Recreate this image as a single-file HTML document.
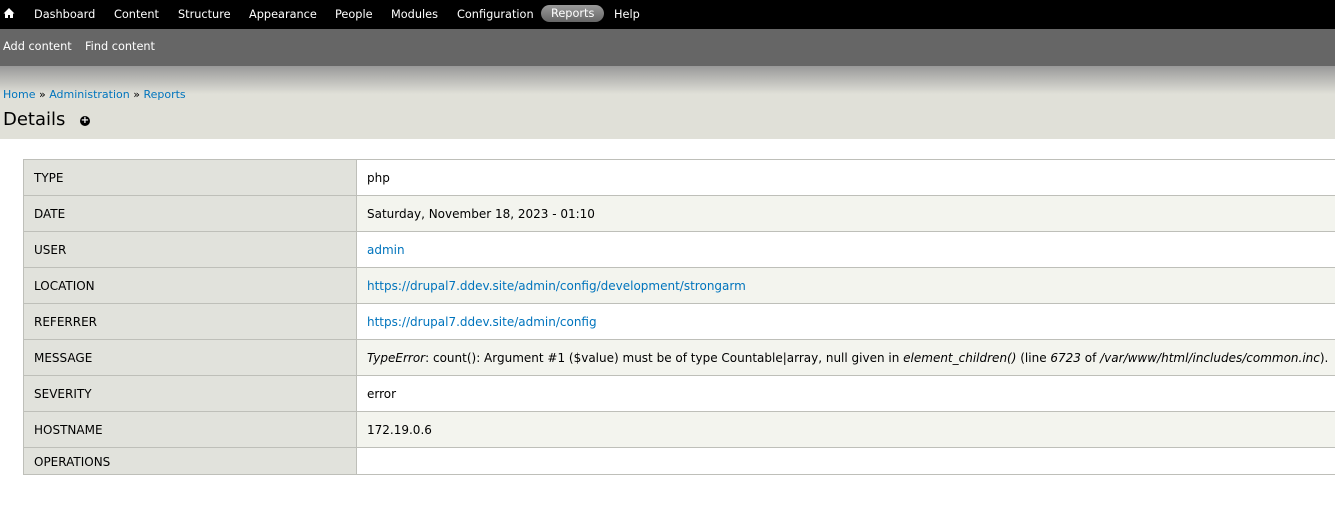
<!DOCTYPE html>
<html><head><style>
*{margin:0;padding:0;box-sizing:border-box}
body{width:1335px;height:514px;background:#fff;font-family:"DejaVu Sans","Liberation Sans",sans-serif;font-size:12px;color:#000;overflow:hidden;position:relative}
a{color:#0074bd;text-decoration:none}
#tb{position:absolute;top:0;left:0;width:1335px;height:29px;background:#000;color:#fff}
#tb span{position:absolute;top:8px;font-size:11.3px}
#tb .act{border-radius:10px;padding:2px 10px;top:5px;background:linear-gradient(#999,#666)}
#sc{position:absolute;top:29px;left:0;width:1335px;height:37px;background:#666;color:#fff}
#sc span{position:absolute;top:10px;font-size:11.3px}
#hd{position:absolute;top:66px;left:0;width:1335px;height:73px;background:linear-gradient(#999 0,#e0e0d8 28px,#e0e0d8 100%)}
#bc{position:absolute;top:22px;left:3px;font-size:11px}
#h1{position:absolute;top:43px;left:3px;font-size:18px;font-weight:normal}
#plus{position:absolute;top:50px;left:80px;width:10px;height:10px;border-radius:50%;background:#000;color:#fff;font-size:10px;line-height:10px;text-align:center;font-weight:bold}
table{position:absolute;top:159px;left:23px;width:1320px;border-collapse:collapse;border-top:1px solid #bebfb9}
td{height:36px;border-bottom:1px solid #bebfb9;font-size:12px;vertical-align:middle;padding:1px 0 0 10px;border-left:1px solid #bebfb9}
th{width:333px;background:#e1e2dc;border:1px solid #bebfb9;text-align:left;font-weight:normal;padding:1px 0 0 10px;font-size:12px}
tr:nth-child(even) td{background:#f3f4ee}
tr:last-child th,tr:last-child td{height:27px}
</style></head><body>
<div id="tb">
<span style="left:3px;top:7px"><svg width="12" height="12" viewBox="0 0 12 12"><path d="M6 1L0.5 6.5H2V11H5V8H7V11H10V6.5H11.5Z" fill="#fff"/></svg></span>
<span style="left:34px">Dashboard</span><span style="left:114px">Content</span><span style="left:178px">Structure</span><span style="left:249px">Appearance</span><span style="left:335px">People</span><span style="left:391px">Modules</span><span style="left:457px">Configuration</span><span class="act" style="left:541px">Reports</span><span style="left:614px">Help</span>
</div>
<div id="sc"><span style="left:3px;top:11px">Add content</span><span style="left:85px;top:11px">Find content</span></div>
<div id="hd"><div id="bc"><a>Home</a> » <a>Administration</a> » <a>Reports</a></div><div id="h1">Details</div><div id="plus">+</div></div>
<table>
<tr><th>TYPE</th><td>php</td></tr>
<tr><th>DATE</th><td>Saturday, November 18, 2023 - 01:10</td></tr>
<tr><th>USER</th><td><a>admin</a></td></tr>
<tr><th>LOCATION</th><td><a>https://drupal7.ddev.site/admin/config/development/strongarm</a></td></tr>
<tr><th>REFERRER</th><td><a>https://drupal7.ddev.site/admin/config</a></td></tr>
<tr><th>MESSAGE</th><td><i>TypeError</i>: count(): Argument #1 ($value) must be of type Countable|array, null given in <i>element_children()</i> (line <i>6723</i> of <i>/var/www/html/includes/common.inc</i>).</td></tr>
<tr><th>SEVERITY</th><td>error</td></tr>
<tr><th>HOSTNAME</th><td>172.19.0.6</td></tr>
<tr><th>OPERATIONS</th><td></td></tr>
</table>
</body></html>
